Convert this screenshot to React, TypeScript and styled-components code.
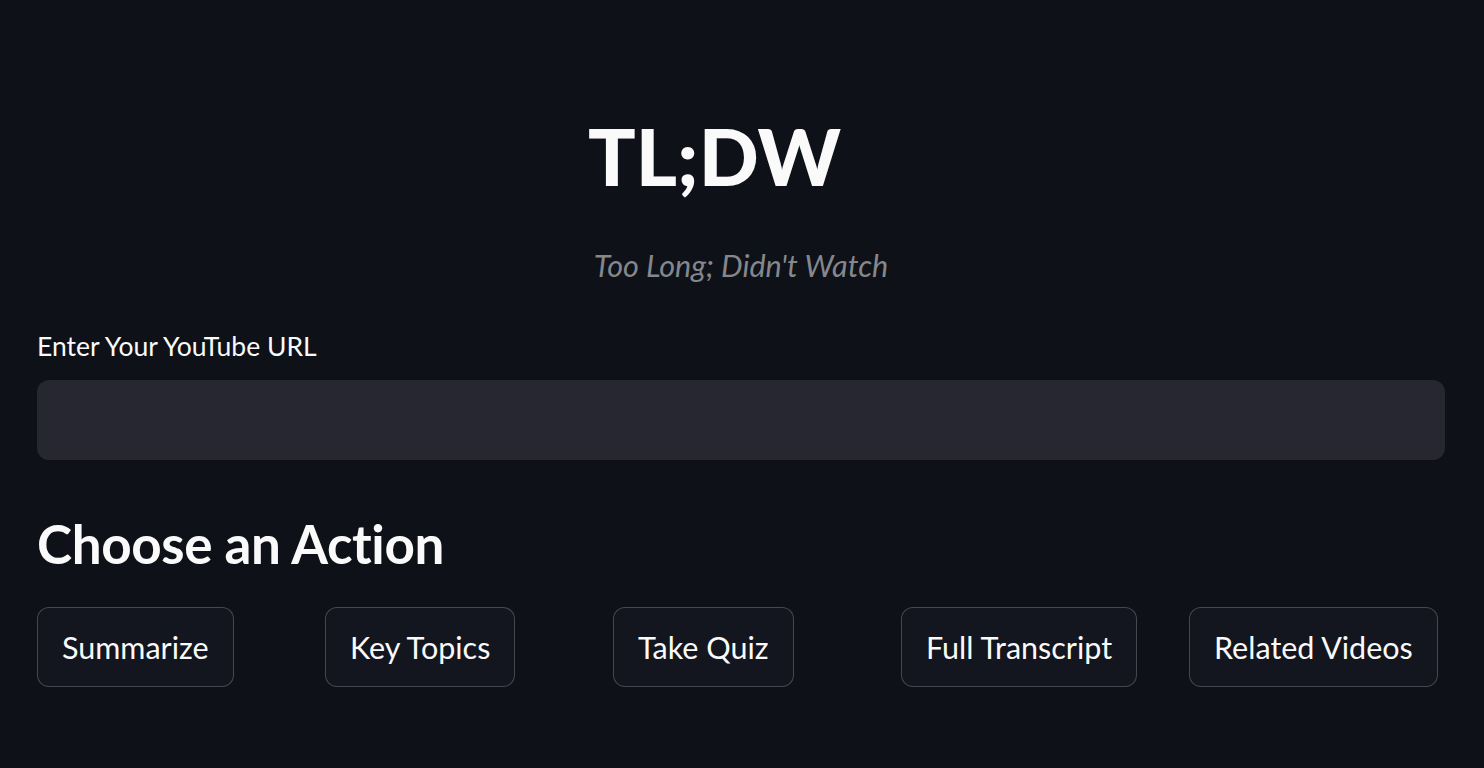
import React from 'react'
import styled, { createGlobalStyle } from 'styled-components'

const GlobalStyle = createGlobalStyle`
  html, body {
    margin: 0;
    background: #0e1117;
  }
  body {
    font-family: Lato, "Noto Sans", sans-serif;
    color: #fafafa;
  }
`

const Page = styled.div`
  min-height: 768px;
  background: #0e1117;
  padding: 116px 39px 0 37px;
  box-sizing: border-box;
`

const Title = styled.h1`
  margin: 0;
  padding-right: 53px;
  text-align: center;
  font-size: 79px;
  line-height: 80px;
  font-weight: 900;
  color: #fafafa;
`

const Subtitle = styled.p`
  margin: 51px 0 0;
  text-align: center;
  font-size: 30.5px;
  line-height: 36px;
  font-style: italic;
  color: #85878d;
`

const Label = styled.label`
  display: block;
  margin-top: 48px;
  font-size: 26.5px;
  line-height: 31px;
  color: #fafafa;
`

const UrlInput = styled.input`
  display: block;
  width: 100%;
  height: 80px;
  margin-top: 18px;
  box-sizing: border-box;
  border: none;
  border-radius: 12px;
  background: #262730;
  color: #fafafa;
  font: inherit;
  font-size: 26px;
  padding: 0 20px;
  outline: none;
`

const Heading = styled.h2`
  margin: 52px 0 0;
  font-size: 53px;
  line-height: 64px;
  font-weight: 700;
  letter-spacing: -0.4px;
  color: #fafafa;
`

const ActionRow = styled.div`
  display: grid;
  grid-template-columns: repeat(5, 1fr);
  gap: 32px;
  margin-top: 31px;
`

const ActionButton = styled.button`
  justify-self: start;
  height: 80px;
  padding: 0 24px;
  border: 1px solid rgba(250, 250, 250, 0.22);
  border-radius: 12px;
  background: #13161e;
  color: #fafafa;
  font-family: inherit;
  font-size: 30.5px;
  white-space: nowrap;
  cursor: pointer;
`

const actions = ['Summarize', 'Key Topics', 'Take Quiz', 'Full Transcript', 'Related Videos']

export default function App() {
  return (
    <>
      <GlobalStyle />
      <Page>
        <Title>TL;DW</Title>
        <Subtitle>Too Long; Didn't Watch</Subtitle>
        <Label htmlFor="yt-url">Enter Your YouTube URL</Label>
        <UrlInput id="yt-url" type="text" />
        <Heading>Choose an Action</Heading>
        <ActionRow>
          {actions.map((a) => (
            <ActionButton key={a}>{a}</ActionButton>
          ))}
        </ActionRow>
      </Page>
    </>
  )
}
